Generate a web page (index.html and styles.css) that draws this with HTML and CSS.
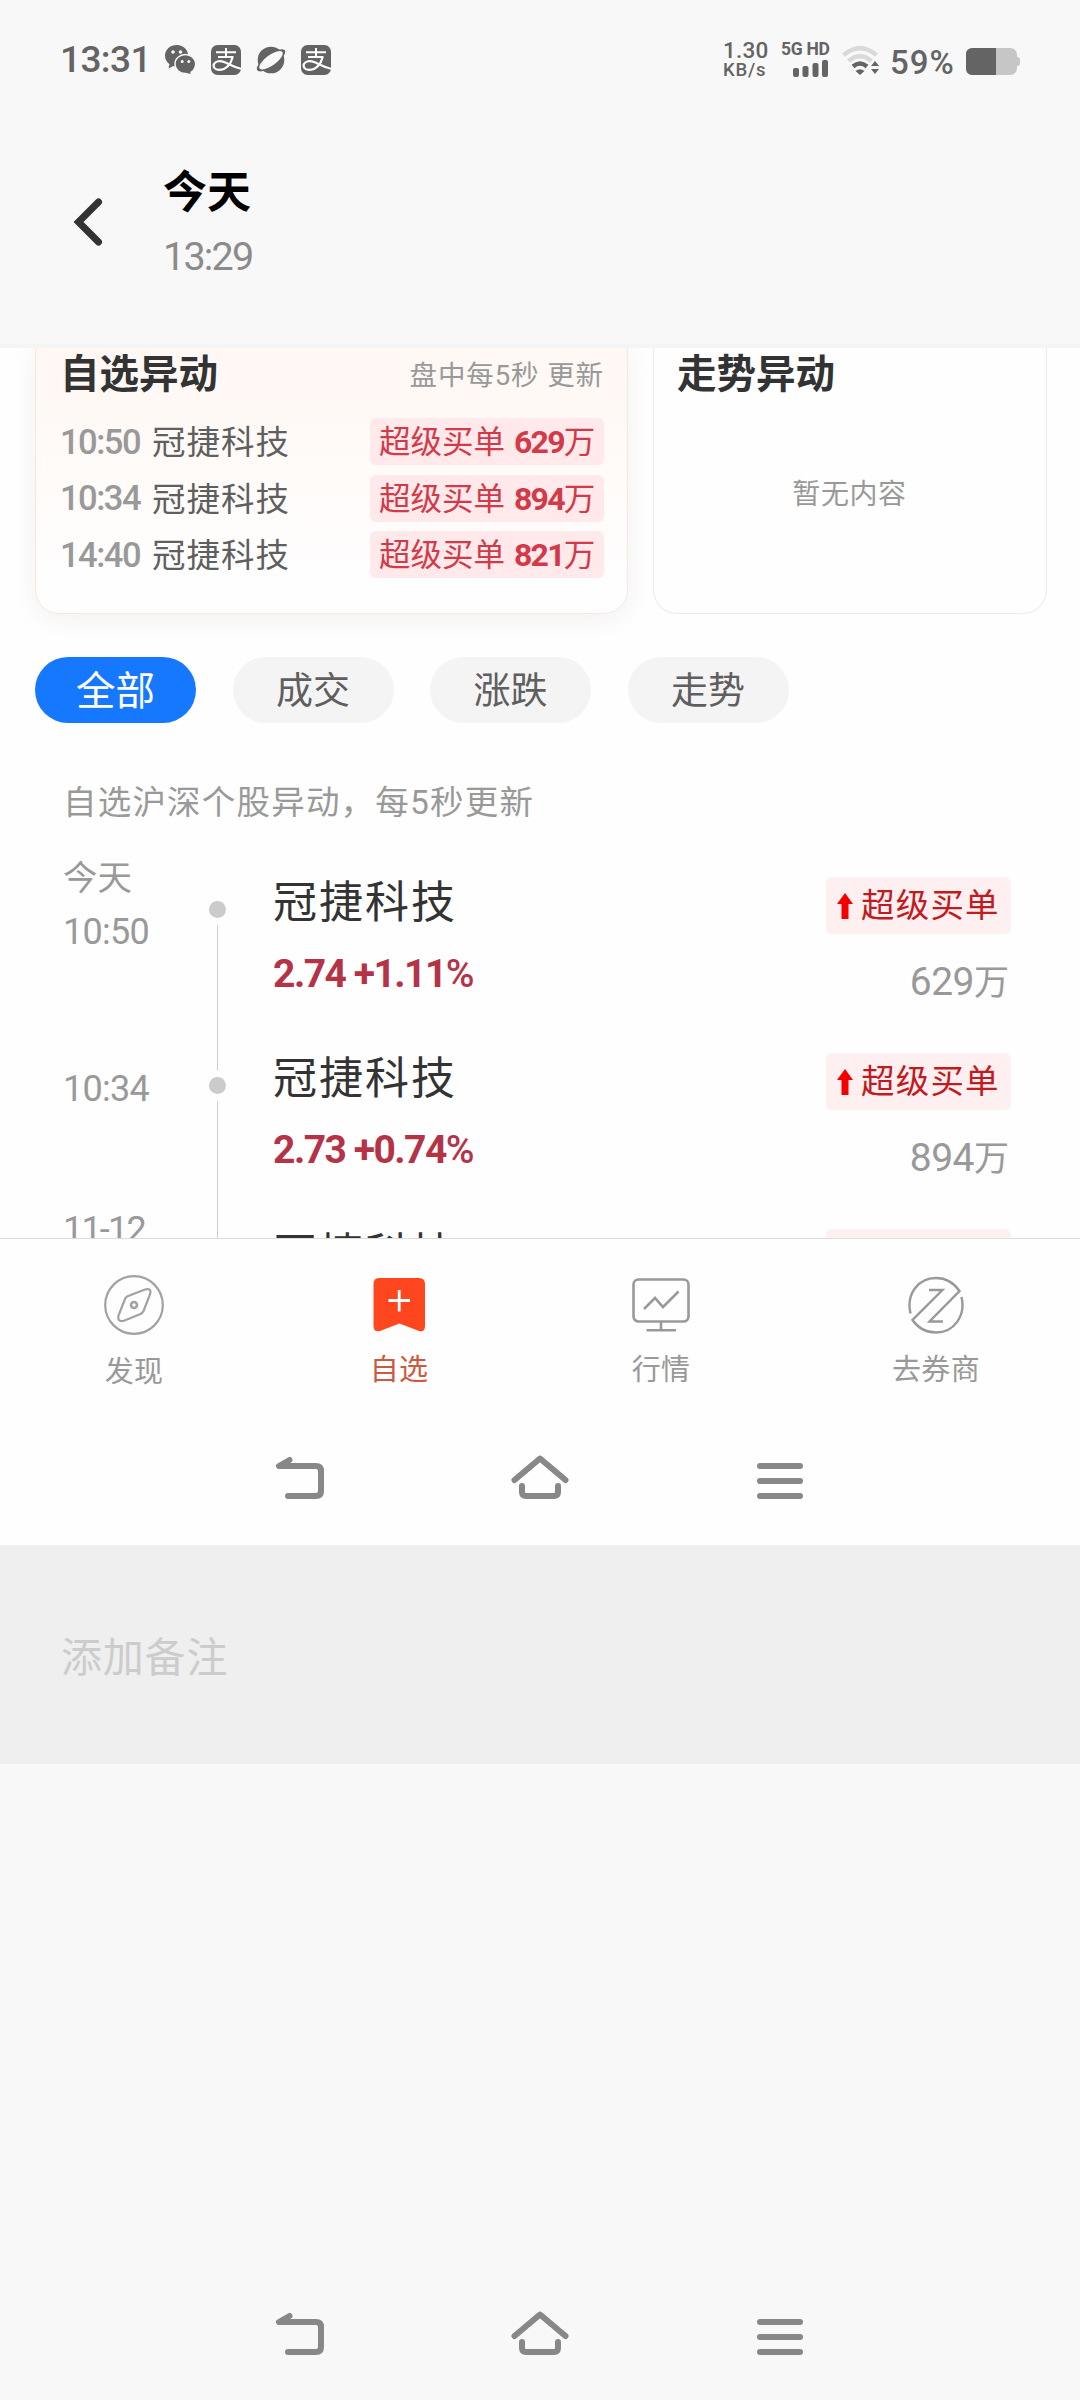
FILE: index.html
```html
<!DOCTYPE html>
<html lang="zh-CN">
<head>
<meta charset="utf-8">
<title>今天 13:29</title>
<link rel="stylesheet" href="styles.css">
</head>
<body>
<svg class="defs" width="0" height="0" aria-hidden="true">
  <symbol id="pay" viewBox="0 0 30 30">
    <rect width="30" height="30" rx="6.5" fill="#646464"/>
    <g fill="none" stroke="#fff" stroke-width="2">
      <path d="M5 7.3H25M15 3V12M7 12H22.5"/>
      <path d="M21.500 12.500C20 18.500 15.500 24.800 8 24.800C3.500 24.800 1.800 21.500 3 19C4.500 16 9 15.400 13 17C18 19 23 22 30 23.800" stroke-width="2.200"/>
    </g>
  </symbol>
  <symbol id="up" viewBox="0 0 16 26"><path d="M8 0L16 11H11.500V26H4.500V11H0Z" fill="#f50000"/></symbol>
  <symbol id="back" viewBox="0 0 50 46"><path d="M14.500 5L4 11H41Q46 11 46 16V36Q46 41 41 41H13" fill="none" stroke="#888" stroke-width="6" stroke-linecap="round" stroke-linejoin="round"/></symbol>
  <symbol id="home" viewBox="0 0 60 46"><path d="M4.500 25L30 3.500L55.500 25M12 31V37Q12 41 16 41H44Q48 41 48 37V31" fill="none" stroke="#888" stroke-width="6" stroke-linecap="round" stroke-linejoin="round"/></symbol>
  <symbol id="menu" viewBox="0 0 46 36"><path d="M3 3H43M3 18H43M3 33H43" stroke="#888" stroke-width="6" stroke-linecap="round"/></symbol>
</svg>

<header class="status">
  <span class="clock">13:31</span>
  <div class="apps">
    <svg width="31" height="30" viewBox="0 0 31 30">
      <path d="M12 0C5 0 0 4.700 0 10.800C0 14.300 1.800 17.200 4.500 19.200L3.500 23.500L8.300 21C10 21.500 12 21.600 13 21.400C17 20 23.500 16 23 9C22 3.500 17.500 0 12 0Z" fill="#646464"/>
      <path d="M20.500 9.500C14.500 9.500 10 13.700 10 19C10 24.400 14.500 28.500 20.500 28.500L27 30L26 27.300C28.800 25.600 30.600 22.700 30.600 19C30.600 13.700 26 9.500 20.500 9.500Z" fill="#646464" stroke="#f8f8f8" stroke-width="1.400"/>
      <circle cx="8" cy="7" r="1.800" fill="#f8f8f8"/><circle cx="15.500" cy="7" r="1.800" fill="#f8f8f8"/>
      <circle cx="17.200" cy="16.500" r="1.500" fill="#f8f8f8"/><circle cx="23.800" cy="16.500" r="1.500" fill="#f8f8f8"/>
    </svg>
    <svg width="30" height="30"><use href="#pay"/></svg>
    <svg width="30" height="30" viewBox="0 0 30 30">
      <circle cx="15" cy="15" r="13.300" fill="#646464"/>
      <ellipse cx="15" cy="15.300" rx="17" ry="6" transform="rotate(-36 15 15.300)" fill="#646464"/>
      <ellipse cx="15" cy="15.300" rx="14" ry="5.200" transform="rotate(-36 15 15.300)" fill="#f8f8f8"/>
    </svg>
    <svg width="30" height="30"><use href="#pay"/></svg>
  </div>
  <div class="rate"><span class="rate-num">1.30</span><span class="rate-unit">KB/s</span></div>
  <div class="cell">
    <span class="net">5G HD</span>
    <svg width="35" height="17" viewBox="0 0 35 17" fill="#646464"><rect y="8" width="6" height="9" rx="2"/><rect x="9.500" y="6" width="6" height="11" rx="2"/><rect x="19.500" y="3" width="6" height="14" rx="2"/><rect x="29" width="6" height="17" rx="2"/></svg>
  </div>
  <svg class="wifi" width="37" height="30" viewBox="0 0 37 30">
    <g fill="none" stroke-width="4.500"><path d="M1.500 9Q18 -4.500 34.500 9" stroke="#d9d9d9"/><path d="M6.500 15Q18 5.500 29.500 15" stroke="#d9d9d9"/><path d="M11 20.500Q18 14.500 25 20.500" stroke="#646464"/></g>
    <path d="M18 29L13.500 25Q18 21.500 22.500 25Z" fill="#646464"/>
    <path d="M29 20L33 15L37 20ZM29 23L33 28L37 23Z" fill="#646464"/>
  </svg>
  <span class="percent">59%</span>
  <svg class="battery" width="54" height="27" viewBox="0 0 54 27">
    <rect width="51" height="27" rx="6.500" fill="#c6c6c6"/><rect x="48" y="9" width="6" height="9" rx="3" fill="#c6c6c6"/>
    <path d="M6.500 0H30V27H6.500Q0 27 0 20.500V6.500Q0 0 6.500 0Z" fill="#646464"/>
  </svg>
</header>

<div class="titlebar">
  <svg width="30" height="50" viewBox="0 0 30 50"><path d="M25.500 5L5.500 25L25.500 45" fill="none" stroke="#333" stroke-width="7" stroke-linecap="round"/></svg>
  <div class="title">
    <h1>今天</h1>
    <p>13:29</p>
  </div>
</div>

<main class="shot">
  <div class="feed">
    <div class="cards">
      <section class="card card-picks">
        <div class="card-head"><h2>自选异动</h2><span class="hint">盘中每5秒 更新</span></div>
        <div class="move"><span class="move-time">10:50</span><span class="move-name">冠捷科技</span><span class="move-tag">超级买单<b>629</b>万</span></div>
        <div class="move"><span class="move-time">10:34</span><span class="move-name">冠捷科技</span><span class="move-tag">超级买单<b>894</b>万</span></div>
        <div class="move"><span class="move-time">14:40</span><span class="move-name">冠捷科技</span><span class="move-tag">超级买单<b>821</b>万</span></div>
      </section>
      <section class="card card-trend">
        <h2>走势异动</h2>
        <p class="empty">暂无内容</p>
      </section>
    </div>

    <div class="chips">
      <span class="chip chip-on">全部</span><span class="chip">成交</span><span class="chip">涨跌</span><span class="chip">走势</span>
    </div>
    <p class="note">自选沪深个股异动，每5秒更新</p>

    <div class="timeline">
      <article class="event">
        <div class="when"><span>今天</span><span class="hour">10:50</span></div>
        <div class="rail rail-first"><i></i></div>
        <div class="stock"><h3>冠捷科技</h3><p>2.74 <span>+1.11<em>%</em></span></p></div>
        <div class="order"><span class="order-tag"><svg width="16" height="26"><use href="#up"/></svg>超级买单</span><span class="amount">629<em>万</em></span></div>
      </article>
      <article class="event">
        <div class="when when-single"><span class="hour">10:34</span></div>
        <div class="rail"><i></i></div>
        <div class="stock"><h3>冠捷科技</h3><p>2.73 <span>+0.74<em>%</em></span></p></div>
        <div class="order"><span class="order-tag"><svg width="16" height="26"><use href="#up"/></svg>超级买单</span><span class="amount">894<em>万</em></span></div>
      </article>
      <article class="event">
        <div class="when"><span class="hour hour-date">11-12</span></div>
        <div class="rail"><i></i></div>
        <div class="stock"><h3>冠捷科技</h3></div>
        <div class="order"><span class="order-tag"></span></div>
      </article>
    </div>
  </div>

  <nav class="tabs">
    <a class="tab tab-find">
      <svg width="60" height="60" viewBox="0 0 60 60" fill="none" stroke="#a2a2a2" stroke-width="2.200"><circle cx="30" cy="30" r="28.800"/><path d="M23.500 21.300L41 14.500Q48 12.500 46 19.500L39.500 36Q38.500 38 36.500 39L20 45.700Q13 47.500 14.500 40.500L21 24Q22 22 23.500 21.300Z"/><circle cx="30" cy="30" r="3" stroke-width="2.600"/></svg>
      <span>发现</span>
    </a>
    <a class="tab tab-on">
      <svg width="60" height="60" viewBox="0 0 60 60"><path d="M10 3H50Q56 3 56 9V51Q56 57.500 50 56L30.500 48.500L11 56Q4.500 57.500 4.500 51V9Q4.500 3 10 3Z" fill="#ff461e"/><path d="M19.500 25.500H41M30.200 15V36.500" stroke="#fff" stroke-width="2.800"/></svg>
      <span>自选</span>
    </a>
    <a class="tab tab-market">
      <svg width="60" height="60" viewBox="0 0 60 60" fill="none" stroke="#999" stroke-width="2.600"><rect x="2.500" y="4.500" width="55" height="42" rx="5"/><path d="M30 46.500V55M15.500 55.300H45M13 34L24 23L32 32L47.500 16.500"/></svg>
      <span>行情</span>
    </a>
    <a class="tab tab-broker">
      <svg width="60" height="60" viewBox="0 0 60 60" fill="none" stroke="#999" stroke-width="2.400"><path d="M5 38.500C-1 20 10 3 30 3C41 3 48.500 9 53.500 16L7 45C11 52 19 57.500 30 57.500" stroke="none"/><path d="M4.500 38.500C0 19 12 3 30 3C40 3 48 8 53.500 16L23.500 46.500H37M55.500 22C60 41 48 57.500 30 57.500C20 57.500 12 53 6.500 45L36.500 15H23"/></svg>
      <span>去券商</span>
    </a>
  </nav>
  <div class="sysnav sysnav-shot">
    <svg width="50" height="46"><use href="#back"/></svg><svg width="60" height="46"><use href="#home"/></svg><svg class="menu" width="46" height="36"><use href="#menu"/></svg>
  </div>
</main>

<div class="remark">添加备注</div>

<div class="sysnav sysnav-device">
  <svg width="50" height="46"><use href="#back"/></svg><svg width="60" height="46"><use href="#home"/></svg><svg class="menu" width="46" height="36"><use href="#menu"/></svg>
</div>
</body>
</html>
```
FILE: styles.css
```css
* { box-sizing: border-box; margin: 0; padding: 0; }
body {
  width: 1080px; height: 2400px; overflow: hidden;
  display: flex; flex-direction: column;
  background: #f8f8f8; color: #333;
  font-family: Roboto, "Noto Sans CJK SC", sans-serif;
}
svg { display: block; flex: none; }
.defs { height: 0; }
em, i { font-style: normal; }
h1, h2, h3 { font-weight: inherit; }

.status { height: 120px; padding-left: 60px; display: flex; color: #646464; white-space: nowrap; }
.clock { width: 105px; margin-top: 40px; font-size: 37px; line-height: 40px; font-weight: 500; letter-spacing: -.6px; }
.apps { display: flex; gap: 15px; margin-top: 45px; width: 166px; }
.rate { margin-left: 392px; margin-top: 40px; width: 58px; display: flex; flex-direction: column; font-weight: 500; }
.rate-num { font-size: 22.500px; line-height: 21px; letter-spacing: .2px; }
.rate-unit { font-size: 18.500px; line-height: 18px; letter-spacing: .8px; }
.cell { margin-top: 41px; width: 61px; display: flex; flex-direction: column; }
.net { font-size: 17.500px; line-height: 17px; font-weight: 700; letter-spacing: -.3px; }
.cell svg { margin: 2px 0 0 12px; }
.wifi { margin-top: 46px; }
.percent { margin: 43px 0 0 11px; width: 76px; font-size: 33px; line-height: 40px; font-weight: 500; letter-spacing: 1px; }
.battery { margin-top: 48px; }

.titlebar { height: 228px; padding: 46px 0 0 73px; display: flex; gap: 60px; border-bottom: 4px solid #f5f5f5; }
.titlebar svg { margin-top: 31px; }
.title h1 { font-size: 44px; line-height: 54px; font-weight: 700; color: #000; }
.title p { font-size: 39.500px; line-height: 44px; margin-top: 15px; color: #8b8b8b; letter-spacing: -1.800px; }

.shot { height: 1197px; background: #fefefe; }
.feed { height: 890px; overflow: hidden; }
.cards { display: flex; gap: 25px; padding-left: 35px; }
.card { height: 266px; border: 1px solid #ebebeb; border-top: 0; border-radius: 0 0 24px 24px; }
.card h2 { font-size: 39.500px; line-height: 54px; font-weight: 700; color: #333; }
.card-picks { width: 593px; padding: 0 23px 0 24px; border-color: #fbe7dc; background: linear-gradient(#fff7f3, #fffbf9 50%, #fefefe 88%); box-shadow: 0 4px 28px rgba(0,0,0,.06); }
.card-head { display: flex; justify-content: space-between; height: 54px; margin-bottom: 16px; }
.hint { font-size: 27.500px; line-height: 55px; letter-spacing: .9px; color: #999; }
.move { display: flex; align-items: center; height: 47px; margin-bottom: 9.500px; white-space: nowrap; }
.move-time { width: 92px; font-size: 34.500px; font-weight: 500; color: #999; letter-spacing: -1.500px; }
.move-name { margin-top: -4px; font-size: 33.500px; letter-spacing: 1px; color: #5f5f5f; }
.move-tag { margin-left: auto; width: 234px; height: 47px; line-height: 48px; padding-left: 9px; border-radius: 6px; background: #ffe9ea; color: #d23a49; font-size: 31.500px; }
.move-tag b { margin-left: 9px; font-size: 32px; letter-spacing: -1.800px; }
.card-trend { width: 394px; padding-left: 23px; background: #fefefe; }
.empty { margin: 71px 24px 0 0; font-size: 28px; line-height: 44px; letter-spacing: .6px; color: #999; text-align: center; }

.chips { display: flex; gap: 36.500px; padding: 43px 0 0 35px; }
.chip { width: 161px; height: 66px; border-radius: 33px; background: #f4f4f4; color: #5f5f5f; font-size: 37px; line-height: 69px; text-align: center; }
.chip-on { background: #1677ff; color: #fff; font-size: 39.500px; }
.note { margin-top: 60px; padding-left: 63px; height: 40px; font-size: 33.500px; line-height: 40px; letter-spacing: 1.200px; color: #999; }

.timeline { padding: 24px 0 0 63px; }
.event { display: flex; height: 176px; white-space: nowrap; }
.when { width: 145px; padding-top: 11px; color: #999; font-size: 34.500px; line-height: 40px; display: flex; flex-direction: column; gap: 14px; }
.when-single { padding-top: 46px; }
.hour { font-size: 36px; letter-spacing: -.7px; }
.hour-date { letter-spacing: -1.800px; }
.rail { width: 18px; display: flex; flex-direction: column; align-items: center; gap: 7px; }
.rail::before { content: ""; width: 1px; height: 47px; background: #ccc; }
.rail::after { content: ""; width: 1px; flex: 1; background: #ccc; }
.rail i { width: 17px; height: 17px; border-radius: 50%; background: #cbcbcb; }
.rail-first::before { visibility: hidden; }
.stock { margin-left: 47px; width: 553px; padding-top: 27px; }
.stock h3 { font-size: 44px; line-height: 58px; letter-spacing: 2px; color: #333; }
.stock p { margin-top: 19px; font-size: 39px; line-height: 46px; font-weight: 700; letter-spacing: -1.500px; color: #b53347; }
.stock em { font-weight: 500; }
.order { width: 185px; padding-top: 30px; display: flex; flex-direction: column; align-items: flex-end; }
.order-tag { width: 185px; height: 57px; padding-left: 11px; line-height: 56px; display: flex; align-items: center; gap: 8px; border-radius: 6px; background: #feeff1; color: #c11a1f; font-size: 33.500px; letter-spacing: 1.200px; }
.amount { margin: 26px 2px 0 0; font-size: 39px; line-height: 44px; letter-spacing: -.5px; color: #999; }
.amount em { font-size: 35px; letter-spacing: 0; }

.tabs { height: 171px; border-top: 1px solid #dcdcdc; display: flex; padding: 36px 0 0 87px; }
.tab { display: flex; flex-direction: column; align-items: center; width: 94px; color: #999; font-size: 29px; line-height: 40px; letter-spacing: .3px; }
.tab span { margin-top: 15px; }
.tab-find span { margin-top: 17px; }
.tab-on { margin-left: 171px; color: #cc5a3e; }
.tab-market { margin-left: 168px; }
.tab-broker { margin-left: 181px; }

.sysnav { display: flex; align-items: flex-start; padding-left: 275px; }
.sysnav svg:nth-child(2) { margin-left: 185px; }
.sysnav .menu { margin: 8px 0 0 187px; }
.sysnav-shot { height: 135px; padding-top: 46px; }
.sysnav-device { margin-top: auto; height: 89px; }
.remark { height: 219px; padding-left: 61px; background: #efefef; color: #ccc; font-size: 41px; line-height: 226px; letter-spacing: .8px; }
```
